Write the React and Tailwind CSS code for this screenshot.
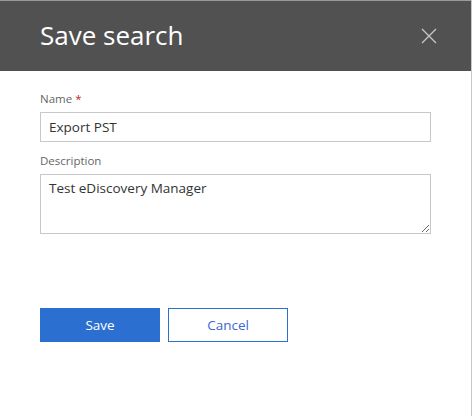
export default function App() {
  return (
    <div
      className="w-[472px] h-[416px] bg-white border-r border-[#c8c8c8] flex flex-col"
      style={{ fontFamily: '"Open Sans", "Noto Sans", sans-serif' }}
    >
      {/* header */}
      <div className="h-[71px] bg-[#515151] border-t border-[#9a9a9a] flex items-center justify-between pl-10 pr-[34px] shrink-0">
        <h1 className="text-[26px] text-white leading-none pb-[2px]">Save search</h1>
        <button className="text-[#c8c8c8]" aria-label="Close">
          <svg width="16" height="16" viewBox="0 0 16 16" fill="none" stroke="currentColor" strokeWidth="1.3">
            <path d="M1 1L15 15M15 1L1 15" />
          </svg>
        </button>
      </div>

      <div className="px-10 pt-[20px] flex flex-col">
        <label className="text-[11.5px] text-[#666666] leading-[16px]">
          Name <span className="text-[#c4262c]">*</span>
        </label>
        <input
          className="mt-[5px] h-[30px] w-[391px] border border-[#c8c8c8] px-2 text-[13.5px] text-[#333333] outline-none"
          defaultValue="Export PST"
        />
        <label className="mt-[11px] text-[11.5px] text-[#666666] leading-[16px]">Description</label>
        <textarea
          className="mt-[5px] h-[60px] w-[391px] border border-[#c8c8c8] px-2 pt-[3px] text-[13.5px] text-[#333333] outline-none"
          defaultValue="Test eDiscovery Manager"
        />

        <div className="mt-[74px] flex gap-2">
          <button className="w-[120px] h-[34px] bg-[#2b6fd1] text-white text-[13.5px]">Save</button>
          <button className="w-[120px] h-[34px] border border-[#2b6fd1] text-[#3a68d3] text-[13.5px]">Cancel</button>
        </div>
      </div>
    </div>
  )
}
